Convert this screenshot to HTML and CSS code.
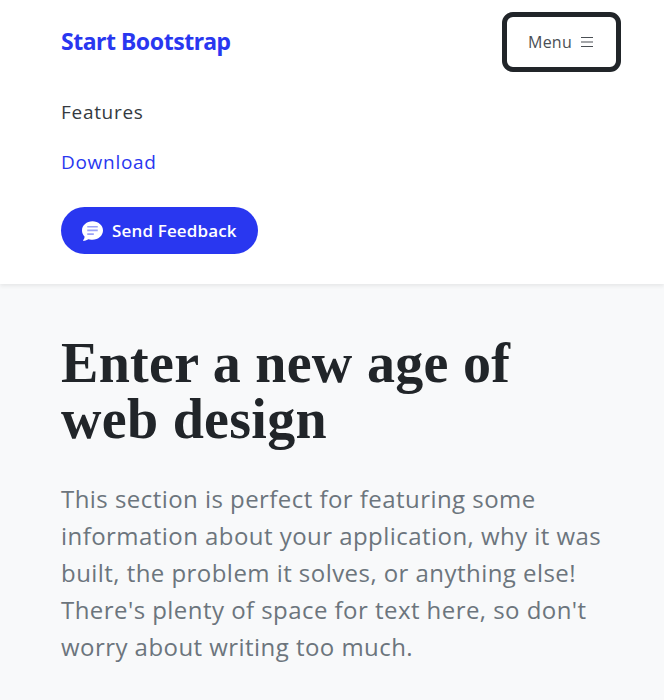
FILE: index.html
```html
<!doctype html>
<html lang="en">
  <head>
    <meta charset="UTF-8" />
    <meta name="viewport" content="width=device-width, initial-scale=1.0" />
    <title>Start Bootstrap</title>
    <link rel="stylesheet" href="styles.css">
  </head>
  <body>
    <nav class="navbar">
      <div class="navbar-top">
        <a class="brand" href="#">Start Bootstrap</a>
        <button class="menu-btn">
          Menu
          <svg class="menu-icon" width="16" height="16" viewBox="0 0 16 16" fill="currentColor">
            <path d="M2 3h12v1H2zM2 7.500h12v1H2zM2 12h12v1H2z" />
          </svg>
        </button>
      </div>
      <ul class="nav-links">
        <li><a href="#">Features</a></li>
        <li><a class="active" href="#">Download</a></li>
      </ul>
      <button class="feedback-btn">
        <svg class="feedback-icon" width="21" height="21" viewBox="0 0 16 16">
          <path fill="currentColor" d="M8 15c4.400 0 8-3.100 8-7s-3.600-7-8-7-8 3.100-8 7c0 1.800.7 3.400 2 4.700-.1 1-.5 2-1.200 2.800-.1.200 0 .5.300.4 1.500-.2 2.900-.8 3.700-1.300.7.200 1.400.4 2.200.4z" />
          <path fill="#9aa1f7" d="M4 4.500h8v1.300H4zM4 7.300h8v1.300H4zM4 10.100h5v1.300H4z" />
        </svg>
        Send Feedback
      </button>
    </nav>

    <section class="hero">
      <h1>Enter a new age of<br />web design</h1>
      <p>
        This section is perfect for featuring some information about your
        application, why it was built, the problem it solves, or anything else!
        There's plenty of space for text here, so don't worry about writing too
        much.
      </p>
    </section>
  </body>
</html>
```
FILE: styles.css
```css
* {
  margin: 0;
  padding: 0;
  box-sizing: border-box;
}

html,
body {
  height: 100%;
}

body {
  font-family: 'Open Sans', sans-serif;
  background: #f8f9fa;
  color: #212529;
  overflow: hidden;
}

.navbar {
  background: white;
  height: 284px;
  padding: 12px 43px 0 61px;
  box-shadow: 0 2px 4px rgba(0, 0, 0, 0.075);
}

.navbar-top {
  display: flex;
  align-items: center;
  justify-content: space-between;
}

.brand {
  padding-bottom: 2px;
  font-family: 'Noto Sans', sans-serif;
  font-size: 23px;
  font-weight: 700;
  letter-spacing: -0.45px;
  color: #2937f0;
  text-decoration: none;
}

.menu-btn {
  display: flex;
  align-items: center;
  justify-content: center;
  gap: 7px;
  width: 119px;
  height: 60px;
  background: white;
  border: 5px solid #212529;
  border-radius: 11px;
  color: #4a4f54;
  font-family: 'Open Sans', sans-serif;
  font-size: 16px;
  letter-spacing: 0.2px;
}

.nav-links {
  list-style: none;
  margin-top: 15px;
}

.nav-links li {
  height: 50px;
  display: flex;
  align-items: center;
}

.nav-links a {
  font-size: 19px;
  letter-spacing: 0.7px;
  color: #343a40;
  text-decoration: none;
}

.nav-links a.active {
  color: #2937f0;
}

.feedback-btn {
  display: flex;
  align-items: center;
  gap: 9px;
  width: 197px;
  height: 47px;
  margin-top: 20px;
  padding-left: 21px;
  background: #2937f0;
  border: none;
  border-radius: 24px;
  color: white;
  font-family: 'Open Sans', sans-serif;
  font-size: 17px;
  font-weight: 600;
  letter-spacing: 0.15px;
}

.hero {
  padding: 51px 40px 0 61px;
}

h1 {
  font-family: 'Liberation Serif', serif;
  font-size: 56px;
  font-weight: 700;
  letter-spacing: 0.3px;
  line-height: 1;
  margin-bottom: 33px;
}

.hero p {
  font-size: 24px;
  letter-spacing: 0.45px;
  line-height: 37px;
  color: #6c757d;
}
```
